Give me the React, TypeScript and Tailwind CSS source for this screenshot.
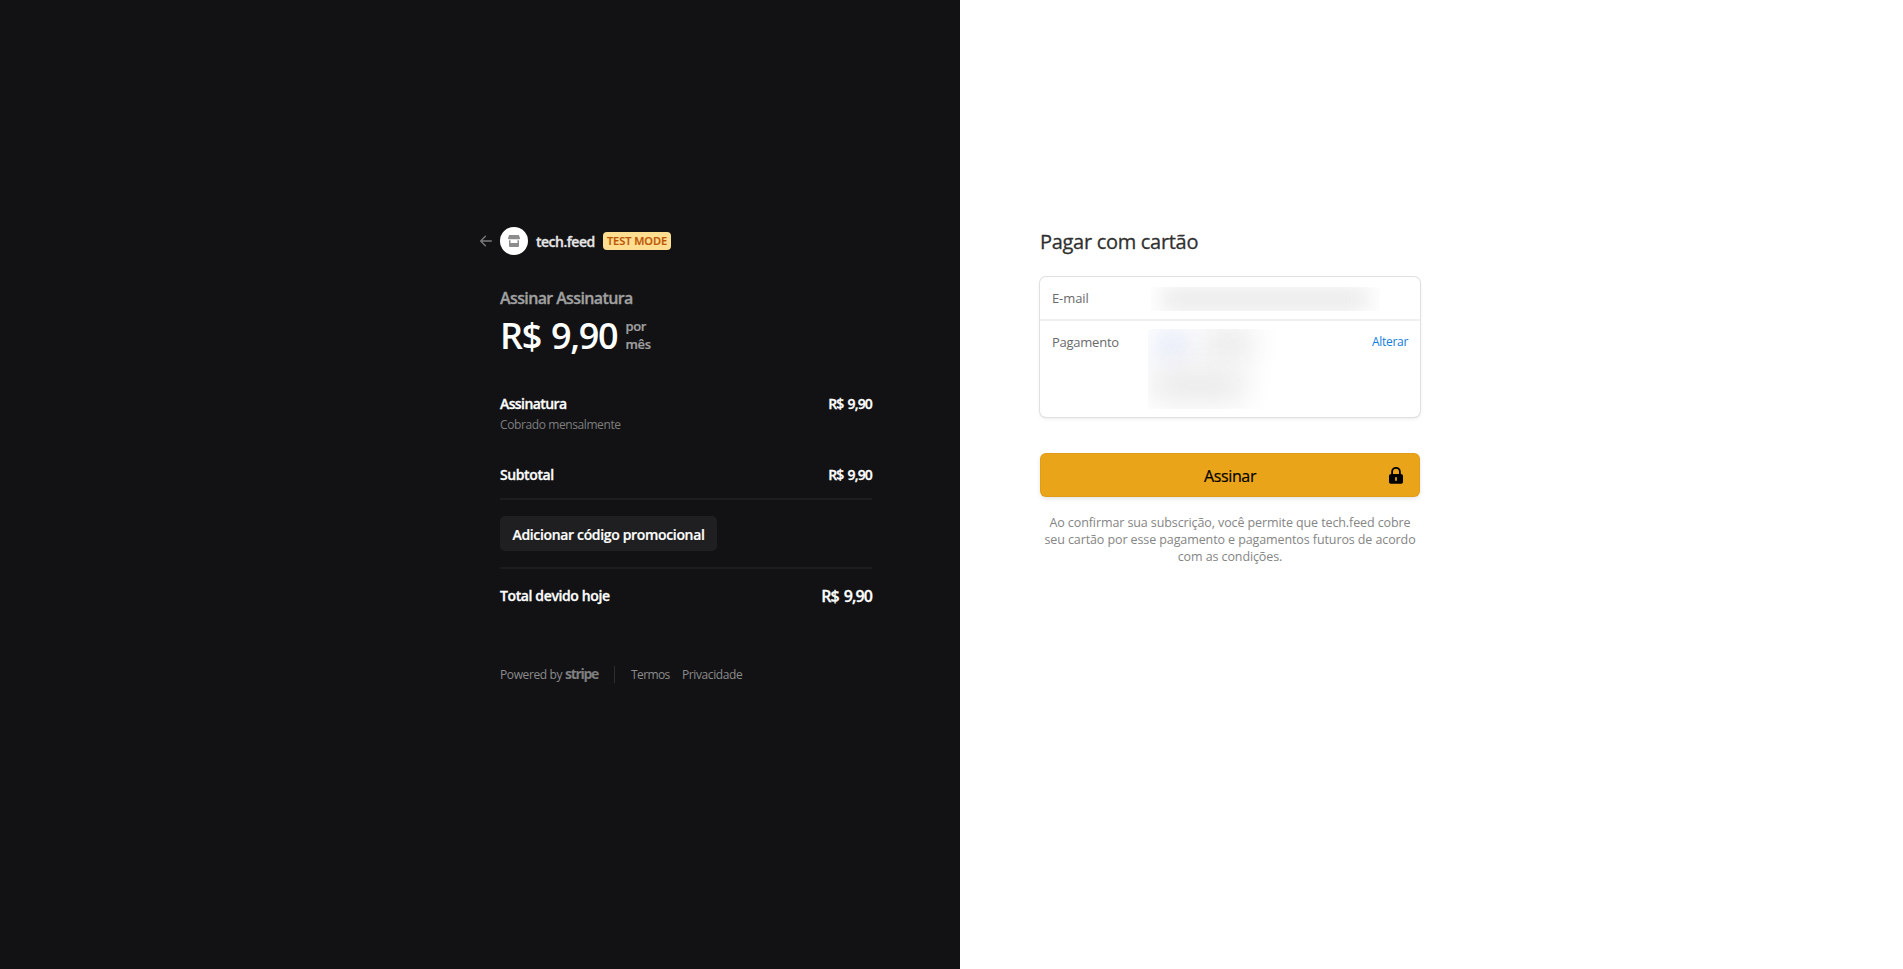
import React from "react";

function StoreIcon() {
  return (
    <svg width="12" height="12" viewBox="0 0 12 12" fill="#8c8c8c">
      <path d="M1.1 0h9.8L12 3.200c0 .7-.5 1.100-1.200 1.100H1.200C.5 4.300 0 3.900 0 3.200z" />
      <path d="M1 5.200h1.500v2.800h7V5.200H11V11a1 1 0 0 1-1 1H2a1 1 0 0 1-1-1z" />
    </svg>
  );
}

function BackArrow() {
  return (
    <svg width="12" height="12" viewBox="0 0 12 12" fill="none" stroke="#7b7b7c" strokeWidth="1.3" strokeLinecap="round" strokeLinejoin="round">
      <path d="M11.400 6H.8M5.400 1.200.7 6l4.700 4.800" />
    </svg>
  );
}

function LockIcon() {
  return (
    <svg width="14" height="17" viewBox="0 0 14 17">
      <path d="M3.100 8V4.700a3.900 3.900 0 0 1 7.800 0V8" fill="none" stroke="#000" strokeWidth="1.800" />
      <path fillRule="evenodd" d="M2 7h10a2 2 0 0 1 2 1.800V15a1.700 1.700 0 0 1-1.700 1.700H1.700A1.700 1.700 0 0 1 0 15V8.800A2 2 0 0 1 2 7zm4.100 3.200v3.600h1.800v-3.600z" />
    </svg>
  );
}

function Summary() {
  return (
    <section className="flex w-[960px] shrink-0 justify-end bg-[#121214] pt-[227px] pr-[88px] text-white">
      <div className="w-[372px]">
        <header className="-ml-5 flex h-7 items-center">
          <BackArrow />
          <span className="ml-2 flex size-7 items-center justify-center rounded-full bg-white">
            <StoreIcon />
          </span>
          <span className="mt-[2px] ml-2 w-[59px] text-[14px] leading-[20px] font-semibold tracking-[-0.5px] whitespace-nowrap text-[#e6e6e6] [-webkit-text-stroke:0.3px]">
            tech.feed
          </span>
          <span className="ml-2 flex h-[18px] w-[68px] items-center justify-center rounded-[4px] bg-[#ffde92] pt-px text-[11px] font-semibold tracking-[-0.03px] whitespace-nowrap text-[#bb5504] [-webkit-text-stroke:0.2px]">
            TEST MODE
          </span>
        </header>

        <h1 className="mt-[31px] h-6 text-[16px] leading-[24px] font-semibold tracking-[-0.62px] text-[#a0a0a1] [-webkit-text-stroke:0.3px]">
          Assinar Assinatura
        </h1>
        <div className="mt-[8px] flex h-[36px] items-center">
          <span className="text-[36px] leading-[36px] font-semibold tracking-[-1.300px] [word-spacing:2px]">R$ 9,90</span>
          <span className="-mt-[2px] ml-2 text-[13px] leading-[18px] font-semibold tracking-[-0.3px] text-[#a0a0a1] [-webkit-text-stroke:0.2px]">
            por
            <br />
            mês
          </span>
        </div>

        <div className="mt-[40px] flex justify-between text-[14px] leading-[20px] font-semibold [-webkit-text-stroke:0.3px]">
          <span className="tracking-[-0.6px]">Assinatura</span>
          <span className="tracking-[-0.85px] [word-spacing:1.400px]">R$ 9,90</span>
        </div>
        <p className="mt-[2px] text-[12px] leading-[18px] tracking-[-0.4px] text-[#7e7e7f]">Cobrado mensalmente</p>

        <div className="mt-[31px] flex justify-between text-[14px] leading-[20px] font-semibold [-webkit-text-stroke:0.3px]">
          <span className="tracking-[-0.4px]">Subtotal</span>
          <span className="tracking-[-0.85px] [word-spacing:1.400px]">R$ 9,90</span>
        </div>
        <div className="mt-[13px] h-[2px] bg-[#1d1d1f]" />
        <button className="mt-4 flex h-[35px] w-[217px] items-center justify-center rounded-[5px] bg-[#1f1f21] pt-[2px] text-[14px] leading-[20px] font-semibold tracking-[-0.34px] whitespace-nowrap [-webkit-text-stroke:0.2px]">
          Adicionar código promocional
        </button>
        <div className="mt-4 h-[2px] bg-[#1d1d1f]" />
        <div className="mt-[17px] flex items-center justify-between leading-[20px] font-semibold [-webkit-text-stroke:0.3px]">
          <span className="text-[14px] tracking-[-0.38px]">Total devido hoje</span>
          <span className="-mt-px text-[16px] tracking-[-0.9px] [word-spacing:1.700px]">R$ 9,90</span>
        </div>

        <footer className="mt-[60px] flex h-[18px] items-center text-[12px] leading-[18px] text-[#8b8b8c]">
          <span className="w-[62px] tracking-[-0.38px] whitespace-nowrap">Powered by</span>
          <span className="-mt-[2px] ml-[3px] w-[33px] text-[14px] font-bold tracking-[-1.300px] text-[#7e7e7f]">stripe</span>
          <span className="-mt-px ml-[16px] h-[17px] w-px bg-[#2d2d2f]" />
          <span className="ml-[16px] w-[39px] tracking-[-0.600px]">Termos</span>
          <span className="ml-[12px] tracking-[-0.4px]">Privacidade</span>
        </footer>
      </div>
    </section>
  );
}

function Payment() {
  return (
    <section className="flex-1 bg-white pt-[228px] pl-20">
      <div className="w-[380px]">
        <h2 className="h-7 text-[20px] leading-[28px] font-medium tracking-[-0.3px] text-[#303030] [-webkit-text-stroke:0.3px]">Pagar com cartão</h2>

        <div className="mt-[21px] h-[140px] rounded-[6px] shadow-[0_0_0_1px_#e0e0e0,0_2px_4px_rgba(0,0,0,0.07),0_1px_1.5px_rgba(0,0,0,0.05)]">
          <div className="flex h-[44px] items-center border-b-2 border-[#f0f0f0] pl-3 text-[13px] text-[#6a6a6a]">
            <span className="mt-[2px] w-[99px] tracking-[-0.1px]">E-mail</span>
            <span className="mt-[2px] flex h-6 w-[229px] items-center overflow-hidden">
              <span className="block h-6 w-[208px] translate-x-[10px] bg-[#e9e9e9] blur-[11px]" />
            </span>
          </div>
          <div className="flex h-[96px] items-start pt-2 pr-3 pl-3 text-[13px] leading-[18px] text-[#6a6a6a]">
            <span className="mt-[4px] w-[96px] tracking-[-0.25px]">Pagamento</span>
            <span className="flex h-20 w-[140px] flex-col gap-[8px] overflow-hidden">
              <span className="flex gap-4">
                <span className="ml-2 block h-8 w-8 bg-[#e2e7f8] blur-[14px]" />
                <span className="block h-7 w-12 bg-[#e6e6e6] blur-[15px]" />
              </span>
              <span className="ml-1 block h-[32px] w-[92px] bg-[#e8e8e8] blur-[15px]" />
            </span>
            <span className="mt-[4px] ml-auto text-[12px] tracking-[-0.3px] text-[#0f7ddb]">Alterar</span>
          </div>
        </div>

        <button className="mt-[36px] grid h-[44px] w-full grid-cols-[1fr_auto_1fr] items-center rounded-[6px] bg-[#eaa419] text-[16px] font-medium text-black shadow-[inset_0_0_0_1px_rgba(120,80,0,0.09),0_2px_4px_rgba(0,0,0,0.1)]">
          <span />
          <span className="mt-px tracking-[-0.35px] [-webkit-text-stroke:0.2px]">Assinar</span>
          <span className="mr-[17px] justify-self-end">
            <LockIcon />
          </span>
        </button>

        <p className="mt-[17px] text-center text-[12.5px] leading-[17px] tracking-[-0.1px] whitespace-nowrap text-[#858585]">
          <span className="block">Ao confirmar sua subscrição, você permite que tech.feed cobre</span>
          <span className="block">seu cartão por esse pagamento e pagamentos futuros de acordo</span>
          <span className="block">com as condições.</span>
        </p>
      </div>
    </section>
  );
}

export default function App() {
  return (
    <main className="flex h-[969px] w-full overflow-hidden font-['Open_Sans','Noto_Sans',sans-serif]">
      <Summary />
      <Payment />
    </main>
  );
}
